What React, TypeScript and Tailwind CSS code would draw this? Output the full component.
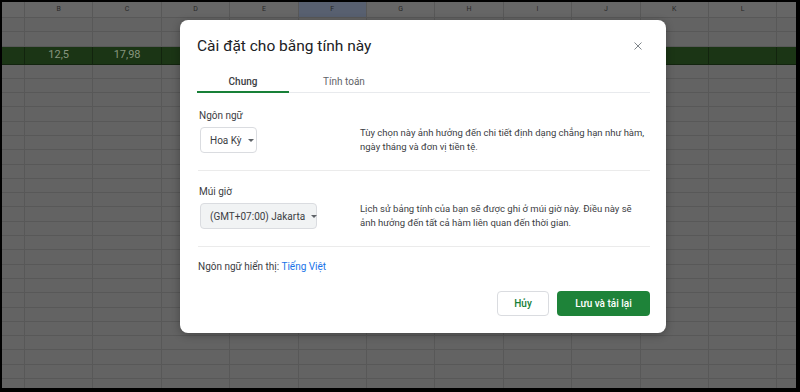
import React from "react";

const cols = ["B", "C", "D", "E", "F", "G", "H", "I", "J", "K", "L"];
const font = { fontFamily: "Roboto, 'Noto Sans', Arial, sans-serif" };

function SheetRow({ green, h, values }: { green?: boolean; h: string; values?: string[] }) {
  return (
    <div className={`flex ${h} ${green ? "bg-[#1b3515]" : ""}`}>
      <div className={`w-[23px] shrink-0 border-r border-b ${green ? "border-[#12240e]" : "border-[#585858]"}`} />
      {cols.map((c, i) => (
        <div
          key={c}
          className={`w-[68.4px] shrink-0 border-r border-b flex items-center justify-center text-[11px] text-[#87957f] ${
            green ? "border-[#12240e]" : "border-[#585858]"
          }`}
        >
          {values?.[i] ?? ""}
        </div>
      ))}
      <div className={`flex-1 border-b ${green ? "border-[#12240e]" : "border-[#585858]"}`} />
    </div>
  );
}

function Select({ label, w, grey }: { label: string; w: string; grey?: boolean }) {
  return (
    <div
      className={`${w} h-[26px] shrink-0 rounded-[4px] border border-[#dadce0] flex items-center justify-between pl-[9px] pr-[8px] text-[10px] text-[#3c4043] whitespace-nowrap ${
        grey ? "bg-[#f1f3f4]" : "bg-white"
      }`}
    >
      <span>{label}</span>
      <svg width="6" height="3" viewBox="0 0 6 3" className="shrink-0 ml-[6px]">
        <path d="M0 0 L6 0 L3 3 Z" fill="#5f6368" />
      </svg>
    </div>
  );
}

export default function App() {
  const rows = Array.from({ length: 23 });
  return (
    <div className="w-[800px] h-[392px] bg-black pt-[2px] pl-[2px] pr-[4px] pb-[4px] relative overflow-hidden" style={font}>
      <div className="w-full h-full bg-[#636363] overflow-hidden">
        {/* column header */}
        <div className="flex h-[16px] bg-[#666666]">
          <div className="w-[23px] shrink-0 border-r border-b border-[#585858]" />
          {cols.map((c) => (
            <div
              key={c}
              className={`w-[68.4px] shrink-0 border-r border-b border-[#585858] flex items-center justify-center text-[7px] text-[#262626] ${
                c === "F" ? "bg-[#586070]" : ""
              }`}
            >
              {c}
            </div>
          ))}
          <div className="flex-1 border-b border-[#585858]" />
        </div>
        <SheetRow h="h-[14px]" />
        <SheetRow h="h-[15px]" />
        <SheetRow h="h-[17.5px]" green values={["12,5", "17,98"]} />
        {rows.map((_, i) => (
          <SheetRow key={i} h="h-[14.3px]" />
        ))}
      </div>

      {/* dialog */}
      <div className="absolute left-[180px] top-[20px] w-[486px] h-[313px] bg-white rounded-[8px] shadow-[0_2px_8px_rgba(0,0,0,0.3)] pl-[17px] pr-[16px] pt-[16px] flex flex-col">
        <div className="flex items-center justify-between h-[20px]">
          <h1 className="text-[15.5px] leading-[20px] text-[#202124]">Cài đặt cho bằng tính này</h1>
          <svg width="8" height="8" viewBox="0 0 8 8" className="mr-[8px]">
            <path d="M0.5 0.5 L7.5 7.5 M7.5 0.5 L0.5 7.5" stroke="#80868b" strokeWidth="1" />
          </svg>
        </div>

        <div className="flex mt-[14px] border-b border-[#e8eaed]">
          <div className="w-[92px] pt-[6px] pb-[3px] text-center text-[10px] leading-[12px] font-medium text-[#3c4043] border-b-2 border-[#188038] -mb-px">
            Chung
          </div>
          <div className="w-[110px] pt-[6px] pb-[4px] text-center text-[10px] leading-[12px] text-[#5f6368]">
            Tính toán
          </div>
        </div>

        <div className="pl-[2px] text-[10px] leading-[14px] text-[#3c4043] mt-[16px]">Ngôn ngữ</div>
        <div className="flex items-center mt-[3px] pl-[3px]">
          <div className="w-[160px] shrink-0">
            <Select label="Hoa Kỳ" w="w-[57px]" />
          </div>
          <p className="text-[9.5px] leading-[14px] text-[#3c4043]">
            Tùy chọn này ảnh hưởng đến chi tiết định dạng chẳng hạn như hàm,
            <br />
            ngày tháng và đơn vị tiền tệ.
          </p>
        </div>
        <div className="h-px bg-[#ebebeb] mt-[16px] ml-[1px]" />

        <div className="pl-[2px] text-[10px] leading-[14px] text-[#3c4043] mt-[14px]">Múi giờ</div>
        <div className="flex items-center mt-[3px] pl-[3px]">
          <div className="w-[160px] shrink-0">
            <Select label="(GMT+07:00) Jakarta" w="w-[117px]" grey />
          </div>
          <p className="text-[9.5px] leading-[14px] text-[#3c4043]">
            Lịch sử bảng tính của bạn sẽ được ghi ở múi giờ này. Điều này sẽ
            <br />
            ảnh hưởng đến tất cả hàm liên quan đến thời gian.
          </p>
        </div>
        <div className="h-px bg-[#ebebeb] mt-[16px] ml-[1px]" />

        <div className="pl-[1px] mt-[13px] text-[10px] leading-[14px] text-[#3c4043]">
          Ngôn ngữ hiển thị: <span className="text-[#1a73e8]">Tiếng Việt</span>
        </div>

        <div className="flex justify-end gap-[8px] mt-[17px]">
          <button className="w-[52px] h-[25px] rounded-[4px] border border-[#dadce0] bg-white text-[10px] font-medium text-[#188038]">
            Hủy
          </button>
          <button className="w-[93px] h-[25px] rounded-[4px] bg-[#1e8339] text-[10px] font-medium text-white">
            Lưu và tải lại
          </button>
        </div>
      </div>
    </div>
  );
}
